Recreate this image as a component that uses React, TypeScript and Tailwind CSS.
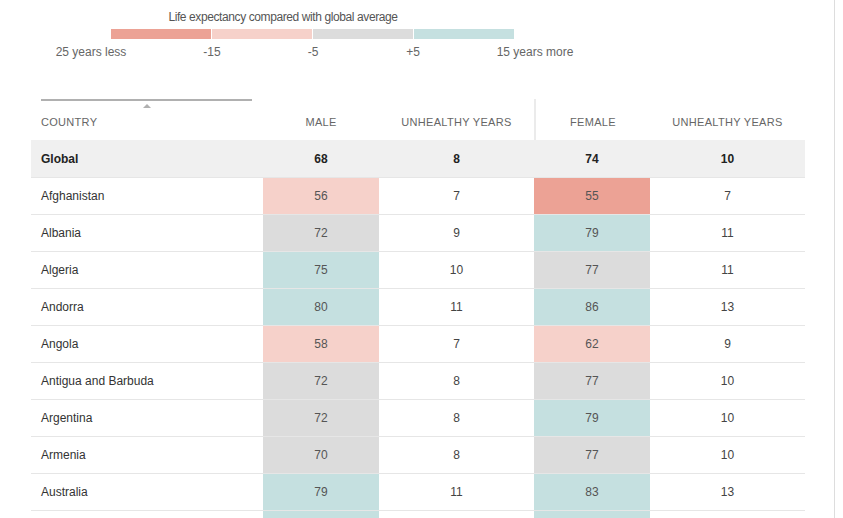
type Band = "low" | "mid" | "flat" | "high";

type Row = {
  country: string;
  male: number;
  maleBand: Band;
  maleSick: number;
  female: number;
  femaleBand: Band;
  femaleSick: number;
};

const bandBg: Record<Band, string> = {
  low: "bg-[#eca295]",
  mid: "bg-[#f6d1ca]",
  flat: "bg-[#dcdcdc]",
  high: "bg-[#c5e0e0]",
};

const rows: Row[] = [
  { country: "Afghanistan", male: 56, maleBand: "mid", maleSick: 7, female: 55, femaleBand: "low", femaleSick: 7 },
  { country: "Albania", male: 72, maleBand: "flat", maleSick: 9, female: 79, femaleBand: "high", femaleSick: 11 },
  { country: "Algeria", male: 75, maleBand: "high", maleSick: 10, female: 77, femaleBand: "flat", femaleSick: 11 },
  { country: "Andorra", male: 80, maleBand: "high", maleSick: 11, female: 86, femaleBand: "high", femaleSick: 13 },
  { country: "Angola", male: 58, maleBand: "mid", maleSick: 7, female: 62, femaleBand: "mid", femaleSick: 9 },
  { country: "Antigua and Barbuda", male: 72, maleBand: "flat", maleSick: 8, female: 77, femaleBand: "flat", femaleSick: 10 },
  { country: "Argentina", male: 72, maleBand: "flat", maleSick: 8, female: 79, femaleBand: "high", femaleSick: 10 },
  { country: "Armenia", male: 70, maleBand: "flat", maleSick: 8, female: 77, femaleBand: "flat", femaleSick: 10 },
  { country: "Australia", male: 79, maleBand: "high", maleSick: 11, female: 83, femaleBand: "high", femaleSick: 13 },
  { country: "Austria", male: 79, maleBand: "high", maleSick: 11, female: 84, femaleBand: "high", femaleSick: 12 },
];

const cols = "grid grid-cols-[232px_116px_155px_116px_155px]";

function Legend() {
  return (
    <div className="pt-[9px] text-[12px] text-[#666]">
      <div className="w-[566px] text-center leading-[16px] tracking-[-0.4px] text-[#555]">
        Life expectancy compared with global average
      </div>
      <div className="ml-[111px] mt-[4px] flex gap-[1px]">
        <div className="h-[10px] w-[100px] bg-[#eca295]" />
        <div className="h-[10px] w-[100px] bg-[#f6d1ca]" />
        <div className="h-[10px] w-[100px] bg-[#dcdcdc]" />
        <div className="h-[10px] w-[100px] bg-[#c5e0e0]" />
      </div>
      <div className="mt-[6px] flex leading-[14px]">
        <span className="ml-[41px] w-[100px] text-center">25 years less</span>
        <span className="ml-[21px] w-[100px] text-center">-15</span>
        <span className="ml-[1px] w-[100px] text-center">-5</span>
        <span className="w-[100px] text-center">+5</span>
        <span className="ml-[22px] w-[100px] text-center">15 years more</span>
      </div>
    </div>
  );
}

function Header() {
  return (
    <div className="mt-[40px]">
      <div className={`${cols} h-[41px] text-[11px] uppercase tracking-[0.3px] text-[#666]`}>
        <div className="flex flex-col">
          <div className="ml-[10px] h-[2px] w-[211px] bg-[#b0b0b0]" />
          <div className="ml-[112px] mt-[3px] h-0 w-0 border-x-[4.5px] border-b-[4px] border-x-transparent border-b-[#b0b0b0]" />
          <div className="mt-[8px] pl-[10px] leading-[13px]">Country</div>
        </div>
        <div className="pt-[17px] text-center leading-[13px]">Male</div>
        <div className="pt-[17px] text-center leading-[13px]">Unhealthy years</div>
        <div className="border-l-2 border-[#ebebeb] pt-[17px] text-center leading-[13px]">Female</div>
        <div className="pt-[17px] text-center leading-[13px]">Unhealthy years</div>
      </div>
    </div>
  );
}

export default function App() {
  return (
    <div className="flex h-[518px] w-[843px] overflow-hidden bg-white font-['Liberation_Sans',Arial,sans-serif]">
      <div className="w-[835px] shrink-0 border-r border-[#dddddd]">
        <Legend />
        <div className="ml-[31px] w-[774px]">
          <Header />
          <div className={`${cols} h-[38px] items-center border-b border-[#e6e6e6] bg-[#f0f0f0] text-[12px] font-bold text-[#222]`}>
            <div className="pl-[10px]">Global</div>
            <div className="text-center">68</div>
            <div className="text-center">8</div>
            <div className="text-center">74</div>
            <div className="text-center">10</div>
          </div>
          {rows.map((r) => (
            <div key={r.country} className={`${cols} h-[37px] border-b border-[#e6e6e6] text-[12px] text-[#444]`}>
              <div className="flex items-center pl-[10px] text-[#333]">{r.country}</div>
              <div className={`flex items-center justify-center text-[#555] ${bandBg[r.maleBand]}`}>{r.male}</div>
              <div className="flex items-center justify-center">{r.maleSick}</div>
              <div className={`flex items-center justify-center text-[#555] ${bandBg[r.femaleBand]}`}>{r.female}</div>
              <div className="flex items-center justify-center">{r.femaleSick}</div>
            </div>
          ))}
        </div>
      </div>
    </div>
  );
}
